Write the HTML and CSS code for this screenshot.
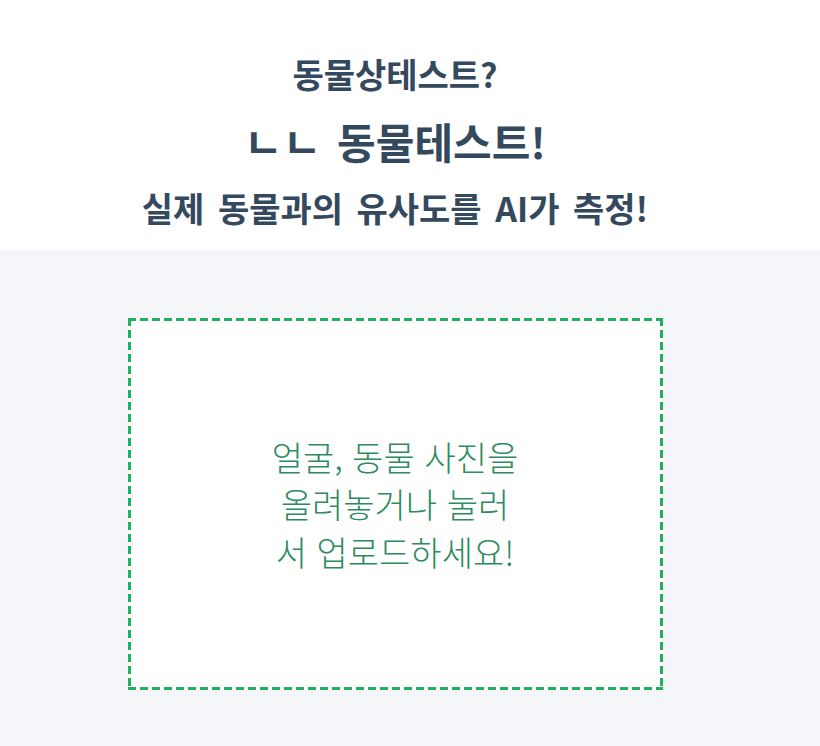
FILE: index.html
```html
<!DOCTYPE html>
<html lang="ko">
<head>
<meta charset="utf-8">
<link rel="stylesheet" href="styles.css">
</head>
<body>
<header class="hero">
  <h2 class="sub">동물상테스트?</h2>
  <h1 class="title">ㄴㄴ 동물테스트!</h1>
  <h2 class="sub">실제 동물과의 유사도를 AI가 측정!</h2>
</header>
<main class="content">
  <div class="drop">
    <p class="drop-text">얼굴, 동물 사진을 올려놓거나 눌러서 업로드하세요!</p>
  </div>
</main>
</body>
</html>
```
FILE: styles.css
```css
html, body {
  margin: 0;
  padding: 0;
  height: 100%;
}
body {
  font-family: "Noto Sans CJK KR", "Noto Sans", sans-serif;
  background: #f5f6fa;
  color: #34495e;
}
.hero {
  background: #ffffff;
  height: 250px;
  box-sizing: border-box;
  padding: 41px 30px 0 0;
  display: flex;
  flex-direction: column;
  align-items: center;
}
.sub {
  margin: 0;
  font-size: 34px;
  font-weight: 700;
  line-height: 66px;
  word-spacing: 4px;
}
.title {
  margin: 0;
  font-size: 42px;
  font-weight: 700;
  line-height: 68px;
  word-spacing: 4px;
}
.content {
  display: flex;
  justify-content: center;
  padding: 68px 30px 0 0;
}
.drop {
  width: 535px;
  height: 372px;
  box-sizing: border-box;
  background:
    repeating-linear-gradient(90deg, #23ad60 0 8px, transparent 8px 12px) left top / 100% 3px no-repeat,
    repeating-linear-gradient(90deg, #23ad60 0 8px, transparent 8px 12px) left bottom / 100% 3px no-repeat,
    repeating-linear-gradient(180deg, #23ad60 0 8px, transparent 8px 12px) left top / 3px 100% no-repeat,
    repeating-linear-gradient(180deg, #23ad60 0 8px, transparent 8px 12px) right top / 3px 100% no-repeat,
    #ffffff;
  display: flex;
  align-items: center;
  justify-content: center;
}
.drop-text {
  margin: 0;
  width: 256px;
  text-align: center;
  font-size: 34px;
  font-weight: 300;
  line-height: 47.5px;
  color: #2e8b5f;
  word-break: break-all;
}
```
